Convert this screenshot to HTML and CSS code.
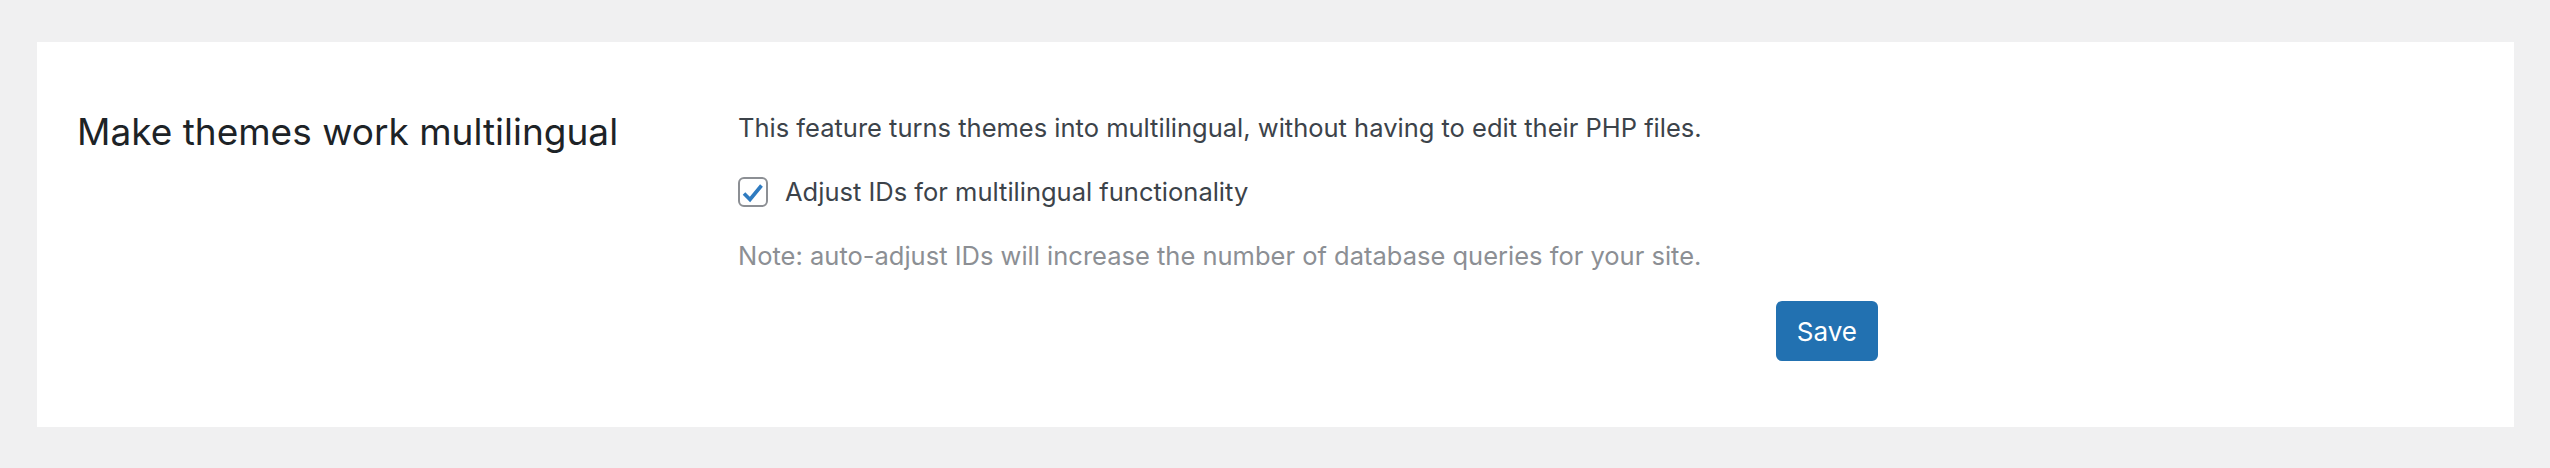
FILE: index.html
```html
<!DOCTYPE html>
<html lang="en">
<head>
  <meta charset="UTF-8">
  <meta name="viewport" content="width=device-width, initial-scale=1.0">
  <title>Theme settings</title>
  <link rel="stylesheet" href="styles.css">
</head>
<body>

  <div class="settings-box">
    <h2 class="settings-title">Make themes work multilingual</h2>

    <div class="settings-body">
      <p class="desc">This feature turns themes into multilingual, without having to edit their PHP files.</p>

      <label class="check-row">
        <span class="checkbox">
          <svg viewBox="0 0 26 26" width="26" height="26"><path d="M4 14.5L10 20.5L21.5 6.5" fill="none" stroke="#2f7bc0" stroke-width="3.6" stroke-linejoin="miter"/></svg>
        </span>
        Adjust IDs for multilingual functionality
      </label>

      <p class="note">Note: auto-adjust IDs will increase the number of database queries for your site.</p>

      <div class="actions">
        <button class="save-btn">Save</button>
      </div>
    </div>
  </div>

</body>
</html>
```

FILE: styles.css
```css
body {
  margin: 0;
  padding: 42px 36px 40px 37px;
  background-color: #f0f0f1;
  font-family: Inter, "Noto Sans", Arial, sans-serif;
}

.settings-box {
  display: flex;
  background-color: #fff;
  padding: 67px 40px 66px 40px;
}

.settings-title {
  width: 661px;
  flex-shrink: 0;
  margin: 0;
  font-size: 37px;
  line-height: 46px;
  font-weight: 400;
  color: #1d2327;
}

.settings-body {
  width: 1140px;
  display: flex;
  flex-direction: column;
  gap: 27px;
  color: #3c434a;
  font-size: 25.5px;
  line-height: 37px;
}

.desc,
.note {
  margin: 0;
}

.note {
  color: #8c8f94;
}

.check-row {
  display: flex;
  align-items: center;
  gap: 17px;
}

.checkbox {
  width: 26px;
  height: 26px;
  flex-shrink: 0;
  border: 2px solid #8c8f94;
  border-radius: 6px;
  display: flex;
}

.actions {
  display: flex;
  justify-content: flex-end;
}

.save-btn {
  height: 60px;
  padding: 0 21px;
  background-color: #2271b1;
  border: none;
  border-radius: 6px;
  color: #fff;
  font-family: inherit;
  font-size: 26px;
  cursor: pointer;
}
```
